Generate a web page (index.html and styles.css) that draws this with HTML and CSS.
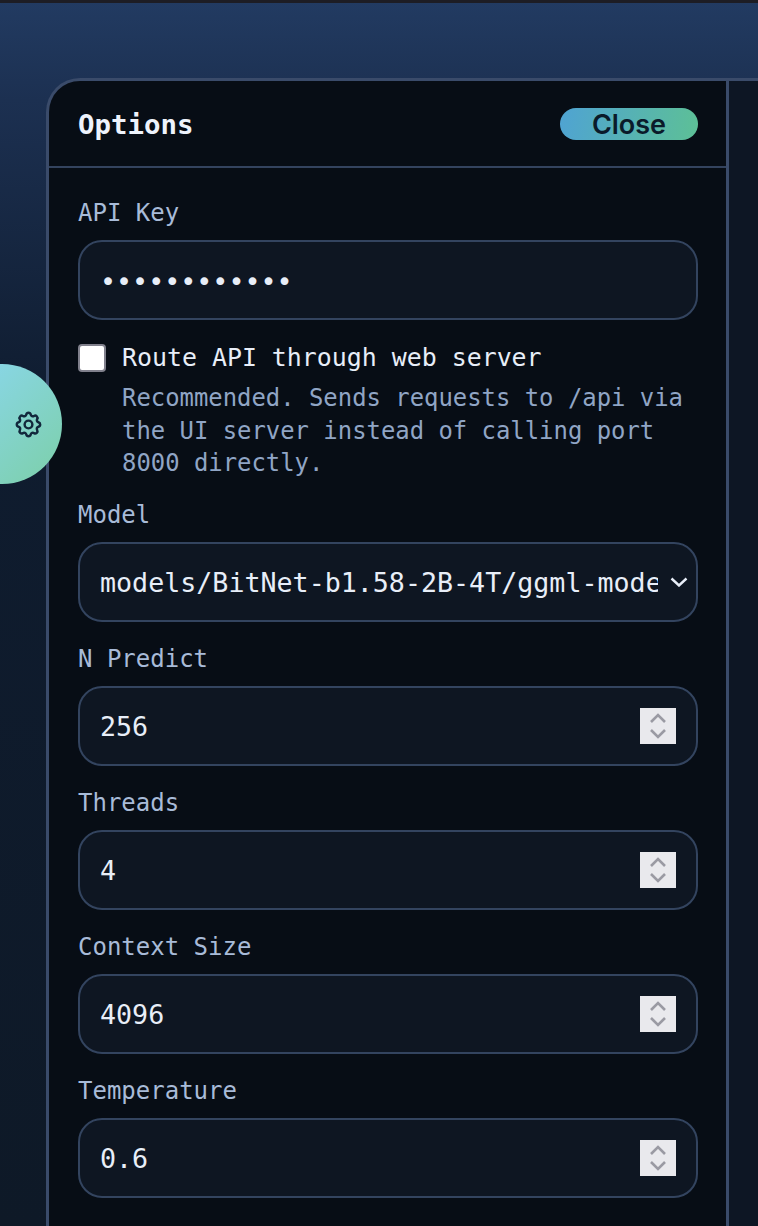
FILE: index.html
```html
<!DOCTYPE html>
<html lang="en">
<head>
    <meta charset="UTF-8">
    <meta name="viewport" content="width=device-width, initial-scale=1.0">
    <title>Options</title>
    <link rel="stylesheet" href="styles.css">
</head>
<body>
    <div class="topbar"></div>
    <div class="stage">
        <aside class="panel">
            <header class="panel-head">
                <h2>Options</h2>
                <button class="close-btn" type="button">Close</button>
            </header>
            <form class="panel-body">
                <div class="group group-key">
                    <label for="apikey">API Key</label>
                    <div class="field"><input id="apikey" type="password" value="sk-local-key"></div>
                </div>
                <div class="check-row">
                    <input type="checkbox" id="proxy">
                    <div>
                        <label class="check-label" for="proxy">Route API through web server</label>
                        <p class="hint">Recommended. Sends requests to /api via the UI server instead of calling port 8000 directly.</p>
                    </div>
                </div>
                <div class="group">
                    <label for="model">Model</label>
                    <div class="field">
                        <select id="model">
                            <option>models/BitNet-b1.58-2B-4T/ggml-model-i2_s.gguf</option>
                        </select>
                        <svg class="chevron" width="18" height="10" viewBox="0 0 18 10"><path d="M1.5 1.5 9 8.5l7.5-7" fill="none" stroke="#e8eef8" stroke-width="2.4"/></svg>
                    </div>
                </div>
                <div class="group">
                    <label for="npredict">N Predict</label>
                    <div class="field">
                        <input id="npredict" type="text" value="256">
                        <span class="spin"><svg width="20" height="30" viewBox="0 0 20 30"><path d="M3 11l7-7 7 7M3 19l7 7 7-7" fill="none" stroke="#9a9aa3" stroke-width="2.6"/></svg></span>
                    </div>
                </div>
                <div class="group">
                    <label for="threads">Threads</label>
                    <div class="field">
                        <input id="threads" type="text" value="4">
                        <span class="spin"><svg width="20" height="30" viewBox="0 0 20 30"><path d="M3 11l7-7 7 7M3 19l7 7 7-7" fill="none" stroke="#9a9aa3" stroke-width="2.6"/></svg></span>
                    </div>
                </div>
                <div class="group">
                    <label for="ctx">Context Size</label>
                    <div class="field">
                        <input id="ctx" type="text" value="4096">
                        <span class="spin"><svg width="20" height="30" viewBox="0 0 20 30"><path d="M3 11l7-7 7 7M3 19l7 7 7-7" fill="none" stroke="#9a9aa3" stroke-width="2.6"/></svg></span>
                    </div>
                </div>
                <div class="group">
                    <label for="temp">Temperature</label>
                    <div class="field">
                        <input id="temp" type="text" value="0.6">
                        <span class="spin"><svg width="20" height="30" viewBox="0 0 20 30"><path d="M3 11l7-7 7 7M3 19l7 7 7-7" fill="none" stroke="#9a9aa3" stroke-width="2.6"/></svg></span>
                    </div>
                </div>
            </form>
        </aside>
        <div class="rest"></div>
    </div>
    <button class="fab" type="button" aria-label="Options">
        <svg width="31" height="31" viewBox="0 0 24 24" fill="none" stroke="#12283c" stroke-width="1.9" stroke-linecap="round" stroke-linejoin="round">
            <path d="M10.3 4.3c.4-1.8 3-1.8 3.4 0a1.7 1.7 0 0 0 2.6 1.1c1.5-.9 3.3.8 2.4 2.4a1.7 1.7 0 0 0 1 2.5c1.8.5 1.8 3 0 3.4a1.7 1.7 0 0 0-1 2.6c.9 1.5-.9 3.3-2.4 2.4a1.7 1.7 0 0 0-2.6 1c-.4 1.8-3 1.8-3.4 0a1.7 1.7 0 0 0-2.6-1c-1.5.9-3.3-.9-2.4-2.4a1.7 1.7 0 0 0-1-2.6c-1.8-.4-1.8-3 0-3.4a1.7 1.7 0 0 0 1-2.5c-.9-1.6.9-3.3 2.4-2.4a1.7 1.7 0 0 0 2.6-1.1z"/>
            <circle cx="12" cy="12" r="3"/>
        </svg>
    </button>
</body>
</html>
```

FILE: styles.css
```css
* {
    box-sizing: border-box;
}
html, body {
    height: 100%;
}
body {
    margin: 0;
    overflow: hidden;
    font-family: "DejaVu Sans Mono", monospace;
    color: #e8eef8;
    background: linear-gradient(180deg, #223b62 0, #1c3051 100px, #0f1c2f 400px, #0e1927 1226px);
}
.topbar {
    height: 3px;
    background-color: #1d1d24;
}
.stage {
    display: flex;
    padding: 75px 0 0 46px;
}
.panel {
    width: 683px;
    height: 1150px;
    background-color: #070d15;
    border: 3px solid #3a4b6a;
    border-bottom: none;
    border-top-left-radius: 34px;
}
.rest {
    flex: 1;
    height: 1150px;
    background-color: #0d1624;
    border-top: 3px solid #3a4b6a;
}
.panel-head {
    display: flex;
    justify-content: space-between;
    align-items: center;
    height: 87px;
    padding: 0 28px 0 29px;
    border-bottom: 2px solid #33435e;
}
.panel-head h2 {
    margin: 0;
    padding-top: 1px;
    font-size: 27.4px;
    font-weight: 700;
    color: #eef3fc;
}
.close-btn {
    width: 138px;
    height: 32px;
    padding: 1px 0 0;
    border: none;
    border-radius: 16px;
    background: linear-gradient(100deg, #4fa3d3, #5dc096);
    color: #0a1a2a;
    font-family: Inter, sans-serif;
    font-size: 27px;
    font-weight: 600;
    line-height: 31px;
}
.panel-body {
    padding: 31px 28px 0 29px;
}
.group {
    margin-bottom: 23px;
}
.group label {
    display: block;
    height: 28px;
    margin-bottom: 13px;
    font-size: 24px;
    line-height: 28px;
    color: #a8bbd8;
}
.group-key {
    margin-bottom: 22px;
}
.field {
    display: flex;
    align-items: center;
    height: 80px;
    padding: 0 20px;
    background-color: #0e1622;
    border: 2px solid #33445f;
    border-radius: 24px;
}
.field input, .field select {
    flex: 1;
    min-width: 0;
    padding: 2px 0 0;
    border: none;
    outline: none;
    background: transparent;
    color: #e8eef8;
    font-family: "DejaVu Sans Mono", monospace;
    font-size: 26.67px;
}
.field select {
    appearance: none;
    margin-right: 10px;
}
.chevron {
    flex: none;
    margin-right: -12px;
    margin-left: 2px;
}
.spin {
    display: flex;
    align-items: center;
    justify-content: center;
    flex: none;
    width: 36px;
    height: 36px;
    background-color: #e9e9ed;
}
.check-row {
    display: flex;
    gap: 16px;
    margin-bottom: 21px;
}
.check-row input {
    flex: none;
    width: 28px;
    height: 28px;
    margin: 2px 0 0;
    appearance: none;
    background-color: #fff;
    border: 2px solid #80808c;
    border-radius: 4px;
}
.check-label {
    display: block;
    font-size: 24.9px;
    line-height: 32px;
    color: #e8eef8;
}
.hint {
    margin: 8px 0 0;
    font-size: 23.9px;
    line-height: 32.5px;
    color: #90a5c5;
}
.fab {
    position: absolute;
    left: -58px;
    top: 364px;
    display: flex;
    align-items: center;
    justify-content: center;
    width: 120px;
    height: 120px;
    padding: 0 0 0 52px;
    border: none;
    border-radius: 50%;
    background: linear-gradient(135deg, #8cd8f5, #7ccfa8);
}
```
